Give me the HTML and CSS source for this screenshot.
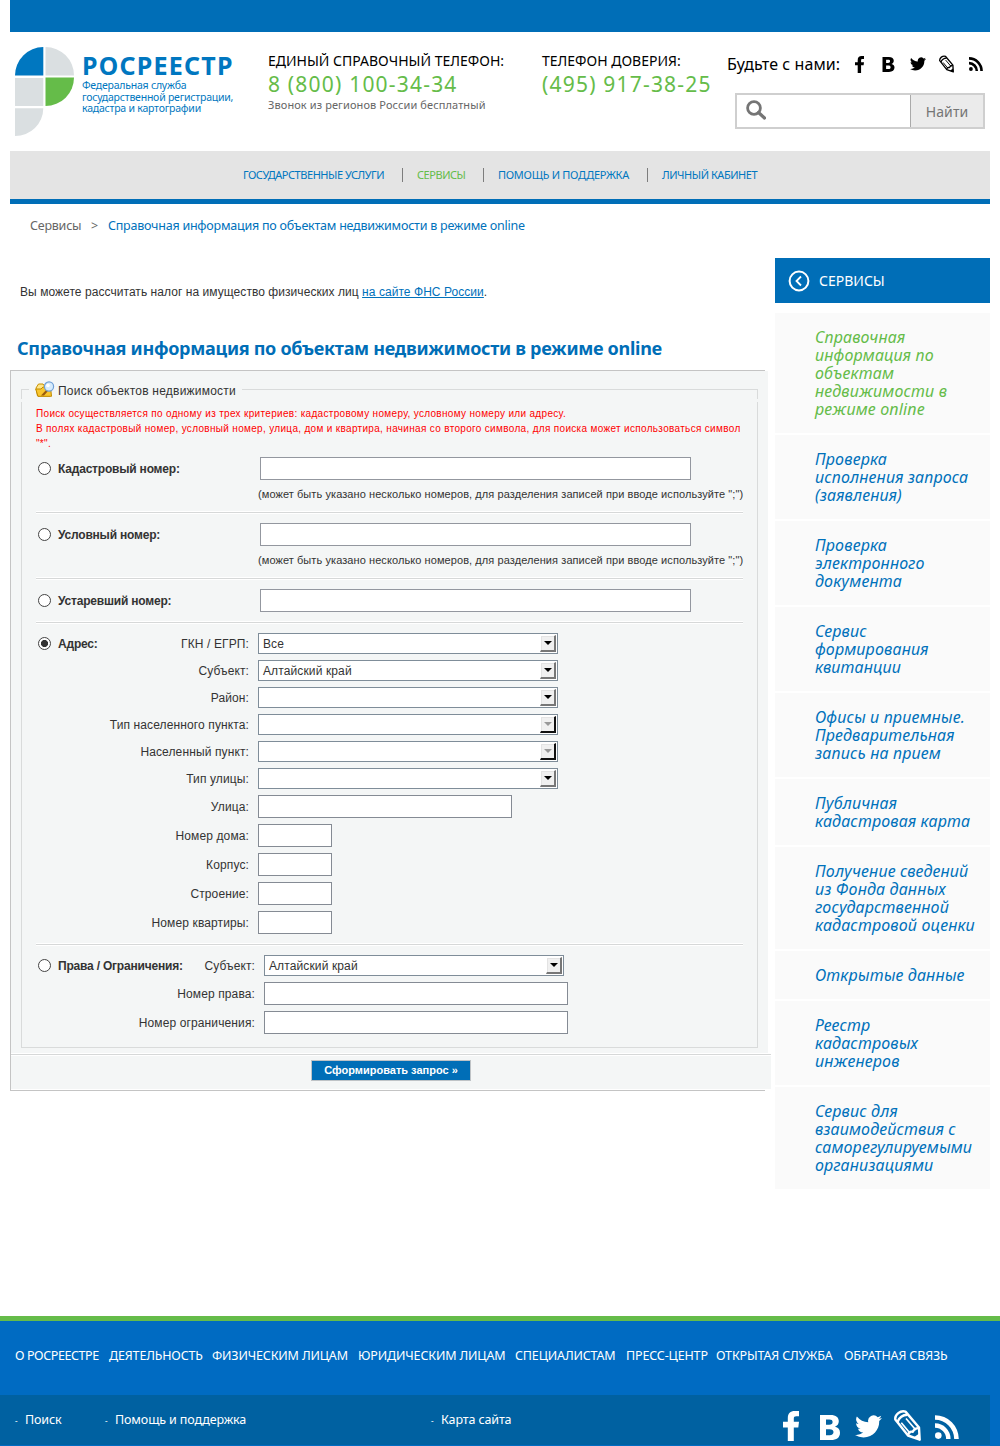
FILE: index.html
```html
<!DOCTYPE html>
<html lang="ru">
<head>
<meta charset="utf-8">
<title>Росреестр — Справочная информация</title>
<link rel="stylesheet" href="styles.css">
</head>
<body>
<svg width="0" height="0" class="defs" aria-hidden="true">
  <symbol id="i-fb" viewBox="0 0 16 30"><path d="M4.8 30V16.5H0V10.8h4.8V7.3C4.800 2.400 7.400 0 11.700 0H16v5.300h-2.700c-1.800 0-2.500.8-2.500 2.400v3.100H16l-.7 5.700h-4.500V30z"/></symbol>
  <symbol id="i-vk" viewBox="0 0 20 25"><path fill-rule="evenodd" d="M0 0h10.500C16 0 18.800 2.300 18.800 6.300c0 2.700-1.500 4.600-3.800 5.400 3.200.7 5 2.900 5 6 0 4.700-3.300 7.300-9.200 7.300H0zM6 4.600v5.200h3.200c2.300 0 3.400-.9 3.400-2.700 0-1.700-1-2.500-3.300-2.500zM6 14.200v6h3.700c2.500 0 3.800-1.100 3.800-3.100 0-1.900-1.300-2.900-3.800-2.900z"/></symbol>
  <symbol id="i-tw" viewBox="0 0 24 20"><path d="M24 2.400a9.800 9.800 0 0 1-2.800.8A5 5 0 0 0 23.300.5a9.900 9.900 0 0 1-3.100 1.200 4.900 4.900 0 0 0-8.400 4.500A14 14 0 0 1 1.700 1a4.900 4.900 0 0 0 1.500 6.600 4.900 4.900 0 0 1-2.200-.6 4.900 4.900 0 0 0 4 4.900 5 5 0 0 1-2.300.1 4.900 4.900 0 0 0 4.600 3.400A9.900 9.900 0 0 1 0 17.500a14 14 0 0 0 7.600 2.200c9 0 14.300-7.600 13.900-14.700A10 10 0 0 0 24 2.400z"/></symbol>
  <symbol id="i-pen" viewBox="0 0 27 31"><g fill="none" stroke="currentColor" stroke-width="2.400" stroke-linejoin="round"><path d="M1.300 9.500C.6 4.800 6.500-.1 11.500 1.600L25 17.500 25.700 29.700 14 25.500z"/><path d="M3.500 12C5 8 8.500 5 13.500 4.800"/><path stroke-width="1.700" d="M7.300 12.700 16.300 23.500M12 8.500 21.800 20"/><path d="M14.300 25.500c-.2-2.900 1.200-4.400 4.500-3.700 1.300-2.900 2.900-3.800 6-3.700"/></g><path d="M19.500 27.500 25.800 30 25.300 23.500z"/></symbol>
  <symbol id="i-rss" viewBox="0 0 24 24"><circle cx="3.300" cy="20.600" r="3.300"/><path d="M0 8.300A15.600 15.600 0 0 1 15.600 24h-4.500A11.200 11.200 0 0 0 0 12.800zM0 .2A23.800 23.800 0 0 1 23.800 24h-4.600A19.200 19.200 0 0 0 0 4.800z"/></symbol>
</svg>
<div class="page">
  <div class="topbar"></div>
  <header class="header">
    <div class="logo">
      <svg width="60" height="90" viewBox="0 0 60 90">
        <path fill="#0077c0" d="M0 28.500A28.500 28.500 0 0 1 28.300 0V28.500z"/>
        <path fill="#dadfe1" d="M30.500 0A28.500 28.500 0 0 1 59 28.500H30.500zM0 31h28.300v28H0zM0 61.200h28.300A28 28 0 0 1 0 89z"/>
        <path fill="#65bc49" d="M30.500 30.500H59A28.500 28.500 0 0 1 30.500 59z"/>
      </svg>
      <div class="logo-text">
        <div class="logo-name">РОСРЕЕСТР</div>
        <div class="logo-sub">Федеральная служба<br>государственной регистрации,<br>кадастра и картографии</div>
      </div>
    </div>
    <div class="phone phone-main">
      <div class="phone-title">ЕДИНЫЙ СПРАВОЧНЫЙ ТЕЛЕФОН:</div>
      <div class="phone-num">8 (800) 100-34-34</div>
      <div class="phone-note">Звонок из регионов России бесплатный</div>
    </div>
    <div class="phone phone-trust">
      <div class="phone-title">ТЕЛЕФОН ДОВЕРИЯ:</div>
      <div class="phone-num">(495) 917-38-25</div>
    </div>
    <div class="header-right">
      <div class="social">
        <span class="social-label">Будьте с нами:</span>
        <svg class="s-fb" width="9" height="17"><use href="#i-fb"/></svg>
        <svg class="s-vk" width="13" height="15"><use href="#i-vk"/></svg>
        <svg class="s-tw" width="16" height="14"><use href="#i-tw"/></svg>
        <svg class="s-pen" width="15" height="18"><use href="#i-pen"/></svg>
        <svg class="s-rss" width="14" height="14"><use href="#i-rss"/></svg>
      </div>
      <div class="search">
        <div class="search-field"><svg width="20" height="20" viewBox="0 0 20 20" fill="none" stroke="#757575"><circle cx="8" cy="8" r="6.400" stroke-width="2.800"/><path d="M12.500 12.500 18.500 18" stroke-width="3.200" stroke-linecap="round"/></svg></div>
        <div class="search-btn">Найти</div>
      </div>
    </div>
  </header>
  <nav class="nav">
    <a class="n1">ГОСУДАРСТВЕННЫЕ УСЛУГИ</a>
    <a class="n2 active">СЕРВИСЫ</a>
    <a class="n3">ПОМОЩЬ И ПОДДЕРЖКА</a>
    <a class="n4">ЛИЧНЫЙ КАБИНЕТ</a>
  </nav>
  <div class="crumbs"><span class="crumb-root">Сервисы</span><span class="crumb-sep">&gt;</span><span class="crumb-here">Справочная информация по объектам недвижимости в режиме online</span></div>
  <div class="columns">
    <main class="main">
      <p class="intro">Вы можете рассчитать налог на имущество физических лиц <a>на сайте ФНС России</a>.</p>
      <h1>Справочная информация по объектам недвижимости в режиме online</h1>
      <div class="panel">
        <div class="panel-body">
          <div class="legend">
            <i class="corner-l"></i>
            <svg width="20" height="17" viewBox="0 0 20 17"><path d="M1 7 3.500 3H8l1.500 2H15v10H2.500z" fill="#ffe68a" stroke="#c79000"/><path d="M.7 8H6l2-2h7.500l1 9.300H3z" fill="#f9c62e" stroke="#c08a00"/><path d="M6 14.500 12 8l1.500 1.500L9 14.500z" fill="#9a5b0c"/><circle cx="14" cy="5.500" r="4.600" fill="#d6ebfc" stroke="#6f9fd6" stroke-width="1.200"/><circle cx="13" cy="4.500" r="1.800" fill="#fff"/></svg>
            <span>Поиск объектов недвижимости</span>
            <i class="corner-r"></i>
          </div>
          <div class="fields">
            <p class="notice">Поиск осуществляется по одному из трех критериев: кадастровому номеру, условному номеру или адресу.<br>В полях кадастровый номер, условный номер, улица, дом и квартира, начиная со второго символа, для поиска может использоваться символ<br>"*".</p>
            <section class="group g-cad">
              <div class="row"><div class="side"><i class="radio"></i><b>Кадастровый номер:</b></div><div class="input long"></div></div>
              <div class="hint">(может быть указано несколько номеров, для разделения записей при вводе используйте ";")</div>
            </section>
            <section class="group g-cond">
              <div class="row"><div class="side"><i class="radio"></i><b>Условный номер:</b></div><div class="input long"></div></div>
              <div class="hint">(может быть указано несколько номеров, для разделения записей при вводе используйте ";")</div>
            </section>
            <section class="group g-old">
              <div class="row"><div class="side"><i class="radio"></i><b>Устаревший номер:</b></div><div class="input long"></div></div>
            </section>
            <section class="group g-addr">
              <div class="row"><div class="side"><i class="radio on"></i><b>Адрес:</b><label>ГКН / ЕГРП:</label></div><div class="select">Все<i class="arrow"></i></div></div>
              <div class="row"><div class="side"><label>Субъект:</label></div><div class="select">Алтайский край<i class="arrow"></i></div></div>
              <div class="row"><div class="side"><label>Район:</label></div><div class="select"><i class="arrow"></i></div></div>
              <div class="row"><div class="side"><label>Тип населенного пункта:</label></div><div class="select"><i class="arrow off"></i></div></div>
              <div class="row"><div class="side"><label>Населенный пункт:</label></div><div class="select"><i class="arrow off"></i></div></div>
              <div class="row"><div class="side"><label>Тип улицы:</label></div><div class="select"><i class="arrow"></i></div></div>
              <div class="row"><div class="side"><label>Улица:</label></div><div class="input street"></div></div>
              <div class="row"><div class="side"><label>Номер дома:</label></div><div class="input short"></div></div>
              <div class="row"><div class="side"><label>Корпус:</label></div><div class="input short"></div></div>
              <div class="row"><div class="side"><label>Строение:</label></div><div class="input short"></div></div>
              <div class="row"><div class="side"><label>Номер квартиры:</label></div><div class="input short"></div></div>
            </section>
            <section class="group g-rights">
              <div class="row"><div class="side"><i class="radio"></i><b>Права / Ограничения:</b><label>Субъект:</label></div><div class="select">Алтайский край<i class="arrow"></i></div></div>
              <div class="row"><div class="side"><label>Номер права:</label></div><div class="input mid"></div></div>
              <div class="row"><div class="side"><label>Номер ограничения:</label></div><div class="input mid"></div></div>
            </section>
          </div>
        </div>
        <div class="panel-foot"><div class="submit">Сформировать запрос »</div></div>
        <div class="panel-end"></div>
      </div>
    </main>
    <aside class="sidebar">
      <div class="side-head"><svg width="22" height="22" viewBox="0 0 22 22" fill="none" stroke="#fff" stroke-width="2"><circle cx="11" cy="11" r="9.400"/><path d="M13 6.500 8.500 11l4.500 4.500" stroke-width="1.800"/></svg><span>СЕРВИСЫ</span></div>
      <ul>
        <li class="active">Справочная<br>информация по<br>объектам<br>недвижимости в<br>режиме online</li>
        <li>Проверка<br>исполнения запроса<br>(заявления)</li>
        <li>Проверка<br>электронного<br>документа</li>
        <li>Сервис<br>формирования<br>квитанции</li>
        <li>Офисы и приемные.<br>Предварительная<br>запись на прием</li>
        <li>Публичная<br>кадастровая карта</li>
        <li>Получение сведений<br>из Фонда данных<br>государственной<br>кадастровой оценки</li>
        <li>Открытые данные</li>
        <li>Реестр<br>кадастровых<br>инженеров</li>
        <li>Сервис для<br>взаимодействия с<br>саморегулируемыми<br>организациями</li>
      </ul>
    </aside>
  </div>
</div>
<footer class="footer">
  <div class="foot-nav"><a class="t1">О РОСРЕЕСТРЕ</a><a>ДЕЯТЕЛЬНОСТЬ</a><a>ФИЗИЧЕСКИМ ЛИЦАМ</a><a>ЮРИДИЧЕСКИМ ЛИЦАМ</a><a>СПЕЦИАЛИСТАМ</a><a>ПРЕСС-ЦЕНТР</a><a>ОТКРЫТАЯ СЛУЖБА</a><a>ОБРАТНАЯ СВЯЗЬ</a></div>
  <div class="foot-bottom">
    <div class="foot-links"><a>Поиск</a><a>Помощь и поддержка</a><a>Карта сайта</a></div>
    <div class="foot-social">
      <svg width="16" height="30"><use href="#i-fb"/></svg>
      <svg width="20" height="25"><use href="#i-vk"/></svg>
      <svg width="27" height="23"><use href="#i-tw"/></svg>
      <svg width="27" height="31"><use href="#i-pen"/></svg>
      <svg width="24" height="24"><use href="#i-rss"/></svg>
    </div>
  </div>
</footer>
</body>
</html>
```
FILE: styles.css
```css
*, *::before { box-sizing: border-box; }
body { margin: 0; background: #fff; color: #333; font: 12px "Liberation Sans", Arial, sans-serif; }
a { color: inherit; }
i { font-style: normal; }
.defs { display: block; width: 0; height: 0; }
.page { width: 980px; margin: 0 auto; height: 1316px; }
.topbar { height: 32px; background: #006eb7; }

.header, .nav, .crumbs, h1, .sidebar, .footer { font-family: "Noto Sans", "Open Sans", sans-serif; white-space: nowrap; }
.header { display: flex; height: 119px; }
.logo { display: flex; width: 258px; padding: 15px 0 0 5px; }
.logo-text { padding-left: 7px; color: #0077c0; }
.logo-name { font-size: 25px; font-weight: 700; line-height: 26px; letter-spacing: 1.200px; padding-top: 5px; }
.logo-sub { margin-top: 2px; font-size: 10.5px; line-height: 11.700px; letter-spacing: -.22px; }
.phone-main { width: 274px; }
.phone-trust { width: 185px; }
.phone { padding-top: 19px; }
.phone-title { color: #000; font-size: 14px; line-height: 20px; }
.phone-num { margin-top: -1px; color: #65bc49; font-size: 21px; line-height: 28px; letter-spacing: 1.200px; }
.phone-note { color: #666; font-size: 11px; line-height: 13px; letter-spacing: .1px; }
.social { display: flex; align-items: center; height: 24px; margin-top: 20px; color: #000; fill: #000; }
.social-label { width: 128px; font-size: 16px; line-height: 24px; letter-spacing: .08px; }
.s-vk { margin-left: 18px; }
.s-tw { margin-left: 15px; }
.s-pen { margin-left: 13px; }
.s-rss { margin-left: 15px; }
.search { display: flex; width: 250px; height: 36px; margin: 17px 0 0 8px; border: 2px solid #cfcfcf; }
.search-field { flex: 1; padding: 5px 0 0 9px; }
.search-btn { width: 73px; border-left: 1px solid #aaa; background: #ebebeb; color: #757575; font-size: 14px; line-height: 33px; text-align: center; letter-spacing: .1px; }

.nav { display: flex; height: 53px; padding-left: 233px; background: #e4e4e4; border-bottom: 5px solid #006eb7; color: #0077c0; font-size: 11px; line-height: 48px; letter-spacing: -.45px; }
.nav a { display: flex; align-items: center; }
.nav a + a::before { content: ""; width: 1px; height: 14px; margin-right: 14px; background: #7d7d7d; }
.nav .active { color: #65bc49; }
.n1 { width: 159px; }
.n2 { width: 81px; }
.n3 { width: 164px; letter-spacing: -.28px; }
.crumbs { display: flex; height: 54px; padding-left: 20px; line-height: 43px; font-size: 12.500px; letter-spacing: -.23px; color: #0071bb; }
.crumb-root, .crumb-sep { color: #666; }
.crumb-root { width: 61px; }
.crumb-sep { width: 17px; }

.columns { display: flex; justify-content: space-between; align-items: flex-start; }
.main { width: 761px; }
.intro { margin: 27px 0 0 10px; line-height: 14px; letter-spacing: .055px; }
.intro a { color: #0071bb; text-decoration: underline; }
h1 { height: 31px; margin: 40px 0 0 7px; color: #006eb7; font-size: 18px; line-height: 19px; font-weight: 700; letter-spacing: -.29px; }
.panel { border-left: 1px solid #c4c4c4; }
.panel-body { width: 757px; height: 682px; padding: 8px 10px 0; background: #f4f6f6; }
.panel::before { content: ""; display: block; width: 754px; height: 1px; background: #c4c4c4; }
.legend { display: flex; align-items: flex-end; width: 737px; height: 20px; }
.legend svg { margin: 0 3px 1px 6px; }
.legend span { line-height: 15px; letter-spacing: .22px; }
.corner-l { width: 8px; height: 10px; border: solid #d9dbdb; border-width: 1px 0 0 1px; }
.corner-r { flex: 1; height: 10px; margin-left: 6px; border: solid #d9dbdb; border-width: 1px 1px 0 0; }
.fields { width: 737px; height: 646px; margin-top: 3px; padding: 4px 14px 0; border: solid #d9dbdb; border-width: 0 1px 1px; }
.notice { margin: 0; height: 45px; color: #f00; font-size: 10px; line-height: 15px; white-space: nowrap; letter-spacing: .32px; }
.group { width: 707px; }
.group + .group { border-top: 1px solid #fff; }
.group + .group::before { content: ""; display: block; height: 2px; margin-bottom: 9px; background: #d6d8d8; border-bottom: 1px solid #fff; }
.g-cad { height: 60px; padding-top: 6px; }
.g-cond { height: 66px; }
.g-old { height: 44px; }
.g-addr { height: 322px; }
.row { display: flex; gap: 9px; margin-bottom: 6px; }
.side { display: flex; align-items: center; width: 213px; white-space: nowrap; }
.side b { letter-spacing: -.2px; }
.g-cad .side, .g-cond .side, .g-old .side { width: 215px; }
.g-rights .side { width: 219px; }
.side label { margin-left: auto; letter-spacing: .12px; }
.radio { width: 13px; height: 13px; margin: 0 7px 0 2px; background: #fff; border: 1px solid #444; border-radius: 50%; }
.radio.on { background: radial-gradient(circle, #333 3.200px, #fff 3.900px); }
.input { height: 23px; background: #fff; border: 1px solid #858b94; }
.long { width: 431px; border-color: #93979f; }
.street { width: 254px; }
.short { width: 74px; }
.mid { width: 304px; }
.select { display: flex; justify-content: space-between; width: 300px; height: 21px; padding: 1px 1px 1px 4px; background: #fff; border: 1px solid #7f8d99; line-height: 18px; letter-spacing: .12px; }
.arrow { display: flex; align-items: center; justify-content: center; width: 16px; height: 17px; margin-left: auto; background: #f0f0f0; border: solid; border-width: 1px 2px 2px 1px; border-color: #fff #777 #777 #fff; box-shadow: inset 1px 1px #e3e3e3; }
.arrow::before { content: ""; border: 4px solid transparent; border-top-color: #000; border-bottom: 0; }
.arrow.off { border-right-color: #111; border-bottom-color: #111; }
.arrow.off::before { border-top-color: #999; }
.hint { margin-left: 222px; font-size: 11px; line-height: 13px; white-space: nowrap; letter-spacing: .08px; }
.row + .hint { margin-top: 8px; }
.panel-foot { width: 760px; height: 37px; padding-top: 5px; background: linear-gradient(#fff 1px, #d6d8d8 1px, #d6d8d8 2px, #fff 2px, #fff 3px, #f4f6f6 3px, #f4f6f6 36px, #fff 36px); }
.submit { width: 160px; height: 21px; margin: 2px 0 0 300px; background: #006eb7; border: 1px solid #bfc3c6; color: #fff; font-size: 11px; font-weight: 700; line-height: 18px; text-align: center; }
.panel-end { width: 754px; height: 1px; background: #c4c4c4; }

.sidebar { width: 215px; }
.side-head { display: flex; align-items: center; height: 45px; margin-bottom: 10px; padding-left: 13px; background: #006eb7; color: #fff; font-size: 14px; }
.side-head span { margin-left: 9px; }
.sidebar ul { margin: 0; padding: 0; list-style: none; }
.sidebar li { margin-bottom: 2px; padding: 15px 0 15px 40px; background: #fafafa; color: #0071bb; font-size: 16px; font-style: italic; line-height: 18px; letter-spacing: .15px; }
.sidebar .active { color: #65bc49; }

.footer { height: 130px; border-top: 5px solid #65bc49; background: #006bc2; color: #fff; }
.foot-nav { display: grid; grid-template-columns: 94px 103px 146px 157px 111px 90px 128px auto; height: 74px; padding-left: 15px; font-size: 12.500px; line-height: 69px; letter-spacing: -.15px; }
.t1 { letter-spacing: -.42px; }
.foot-bottom { display: flex; justify-content: space-between; width: 990px; height: 51px; background: #0061a1; border-bottom: 1px solid #006bc2; }
.foot-links { display: grid; grid-template-columns: 90px 326px auto; padding-left: 15px; font-size: 12.500px; line-height: 50px; letter-spacing: -.12px; }
.foot-links a::before { content: "-"; display: inline-block; width: 10px; font-size: 8px; }
.foot-social { display: flex; width: 207px; padding-top: 15px; color: #fff; fill: #fff; }
.foot-social svg:nth-child(1) { margin-top: 1px; }
.foot-social svg:nth-child(2) { margin: 5px 0 0 21px; }
.foot-social svg:nth-child(3) { margin: 5px 0 0 15px; }
.foot-social svg:nth-child(4) { margin: 0 0 0 12px; }
.foot-social svg:nth-child(5) { margin: 5px 0 0 14px; }
```
